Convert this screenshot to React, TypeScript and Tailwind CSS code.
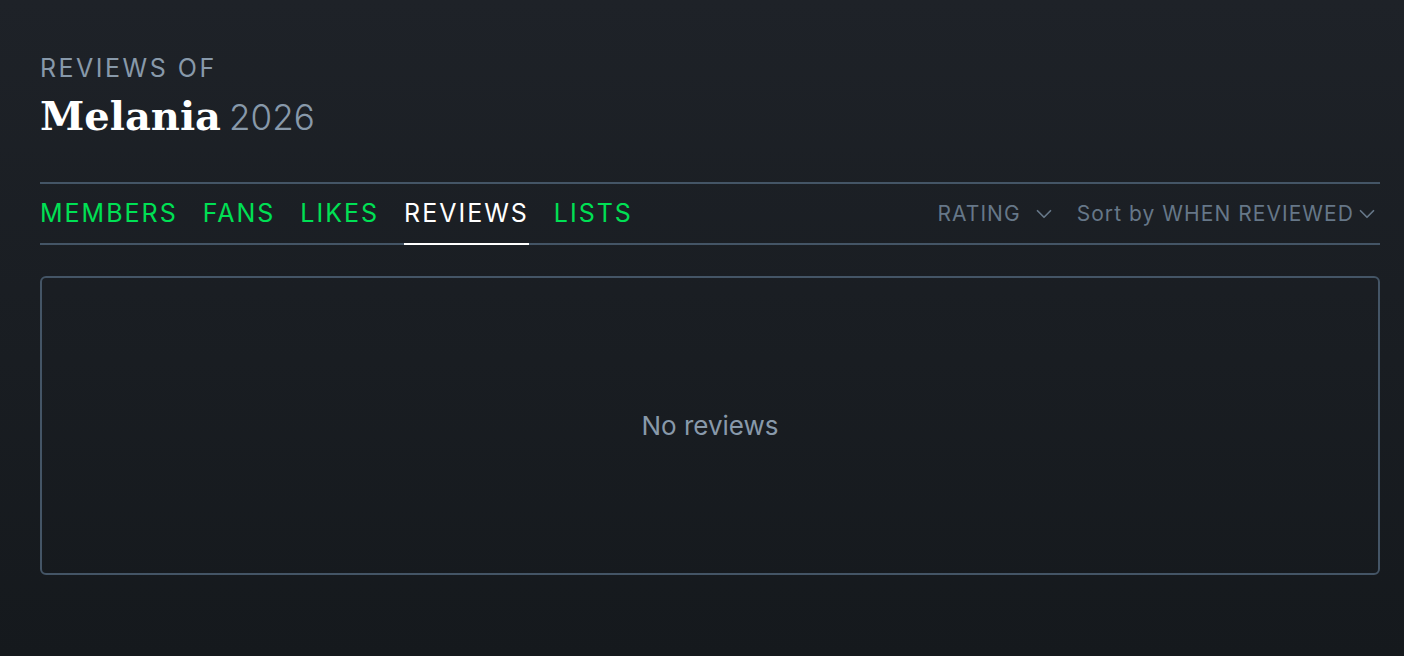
import { ChevronDown } from "lucide-react";

const tabs = ["MEMBERS", "FANS", "LIKES", "REVIEWS", "LISTS"];

function App() {
  return (
    <div className="min-h-[656px] w-full bg-gradient-to-b from-[#1e2228] to-[#15191d] pl-10 pr-6 pt-[52px] font-['Inter',sans-serif]">
      {/* Heading */}
      <p className="text-[25px] leading-[32px] tracking-[0.1em] text-[#8899aa]">REVIEWS OF</p>
      <h1 className="mt-[8px] flex items-baseline gap-[8px] leading-[48px]">
        <span className="font-['DejaVu_Serif',serif] text-[40px] font-bold text-white">Melania</span>
        <span className="text-[35px] font-light text-[#8899aa]">2026</span>
      </h1>

      {/* Tabs */}
      <div className="mt-[41px] flex h-[63px] items-stretch justify-between border-y-2 border-[#456]">
        <ul className="flex gap-[25px]">
          {tabs.map((t) => (
            <li
              key={t}
              className={
                t === "REVIEWS"
                  ? "-mb-[2px] flex items-center border-b-2 border-white text-[25px] tracking-[0.08em] text-white"
                  : "flex items-center text-[25px] tracking-[0.08em] text-[#00e054]"
              }
            >
              {t}
            </li>
          ))}
        </ul>
        <div className="flex items-center text-[21px] tracking-[0.05em] text-[#678]">
          <span>RATING</span>
          <ChevronDown className="ml-[10px] h-[26px] w-[26px]" strokeWidth={1.6} />
          <span className="ml-[20px]">Sort by WHEN REVIEWED</span>
          <ChevronDown className="h-[26px] w-[26px]" strokeWidth={1.6} />
        </div>
      </div>

      {/* Empty state */}
      <div className="mt-[31px] flex h-[299px] items-center justify-center rounded-md border-2 border-[#456]">
        <p className="text-[26px] text-[#8899aa]">No reviews</p>
      </div>
    </div>
  );
}

export default App;
